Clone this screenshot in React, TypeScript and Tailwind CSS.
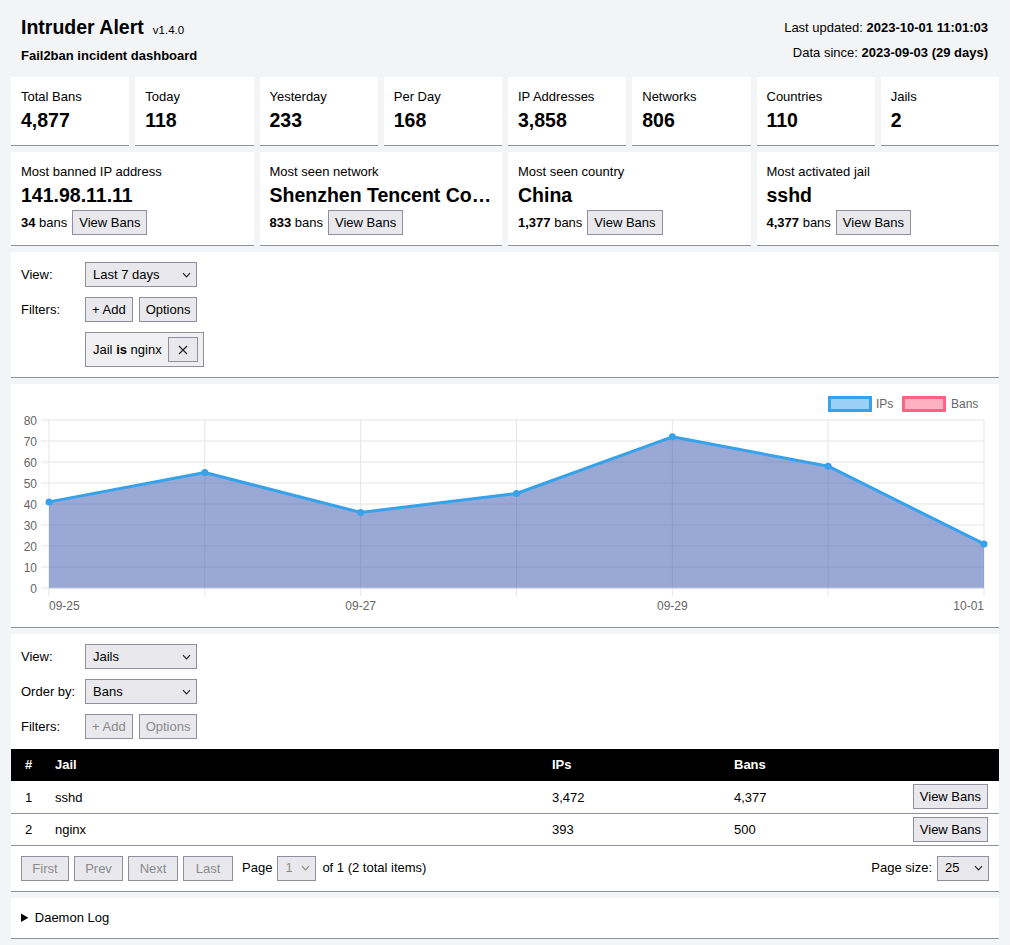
import React from "react";

function Chevron({ color = "#222" }: { color?: string }) {
  return (
    <svg width="9" height="6" viewBox="0 0 9 6" className="shrink-0">
      <path d="M1 1.2 L4.5 4.8 L8 1.2" stroke={color} strokeWidth="1.2" fill="none" />
    </svg>
  );
}

function Select({ value, className, disabled }: { value: string; className: string; disabled?: boolean }) {
  return (
    <div
      className={
        "flex h-[25px] items-center justify-between border border-[#8f8f9d] bg-[#e9e9ed] pl-[7px] pr-[5px] " +
        (disabled ? "text-[#8a8a8a] " : "") +
        className
      }
    >
      <span>{value}</span>
      <Chevron color={disabled ? "#8a8a8a" : "#222"} />
    </div>
  );
}

function Btn({ children, disabled, className = "" }: { children: React.ReactNode; disabled?: boolean; className?: string }) {
  return (
    <button
      className={
        "flex h-[25px] items-center justify-center border border-[#8f8f9d] bg-[#e9e9ed] px-[6px] leading-none " +
        (disabled ? "text-[#8a8a8a] " : "text-black ") +
        className
      }
    >
      {children}
    </button>
  );
}

function Stat({ label, value }: { label: string; value: string }) {
  return (
    <div className="h-[69px] border-b border-[#8f8f9d] bg-white px-[10px] pt-[10px]">
      <div className="leading-[19px]">{label}</div>
      <div className="text-[19.5px] font-bold leading-[28px]">{value}</div>
    </div>
  );
}

function Top({ label, value, bans }: { label: string; value: string; bans: string }) {
  return (
    <div className="h-[94px] min-w-0 border-b border-[#8f8f9d] bg-white px-[10px] pt-[10px]">
      <div className="leading-[19px]">{label}</div>
      <div className="truncate text-[19.5px] font-bold leading-[28px]">{value}</div>
      <div className="mt-[1px] flex items-center gap-[5px]">
        <span>
          <b>{bans}</b> bans
        </span>
        <Btn>View Bans</Btn>
      </div>
    </div>
  );
}

function Chart() {
  const xs = [38, 193.83, 349.67, 505.5, 661.33, 817.17, 973];
  const vals = [41, 55, 36, 45, 72, 58, 21];
  const y = (v: number) => 204 - v * 2.1;
  const pts = xs.map((x, i) => `${x},${y(vals[i])}`).join(" ");
  const area = `38,204 ${pts} 973,204`;
  const grid = [0, 10, 20, 30, 40, 50, 60, 70, 80];
  return (
    <svg width="988" height="243" viewBox="0 0 988 243" className="block">
      {grid.map((g) => (
        <g key={g}>
          <line x1="30" x2="973" y1={y(g)} y2={y(g)} stroke="#e5e5e5" strokeWidth="1" />
          <text x="26" y={y(g) + 4.5} textAnchor="end" fontSize="12" fill="#666" fontFamily="Liberation Sans, Arial, sans-serif">
            {g}
          </text>
        </g>
      ))}
      {xs.map((x, i) => (
        <line key={i} x1={x} x2={x} y1="36" y2="212" stroke="#e5e5e5" strokeWidth="1" />
      ))}
      <polygon points={area} fill="rgba(53,81,171,0.5)" />
      <line x1="38" x2="973" y1="204" y2="204" stroke="#c9cbe0" strokeWidth="1" />
      <polyline points={pts} fill="none" stroke="#36a2eb" strokeWidth="3" strokeLinejoin="round" />
      {xs.map((x, i) => (
        <circle key={i} cx={x} cy={y(vals[i])} r="3.5" fill="#36a2eb" />
      ))}
      <g fontSize="12" fill="#666" fontFamily="Liberation Sans, Arial, sans-serif">
        <text x="38" y="226" textAnchor="start">09-25</text>
        <text x="349.67" y="226" textAnchor="middle">09-27</text>
        <text x="661.33" y="226" textAnchor="middle">09-29</text>
        <text x="973" y="226" textAnchor="end">10-01</text>
      </g>
      <rect x="818.5" y="13.5" width="41" height="13" fill="rgba(54,162,235,0.5)" stroke="#36a2eb" strokeWidth="3" />
      <text x="865" y="23.5" fontSize="12" fill="#666" fontFamily="Liberation Sans, Arial, sans-serif">IPs</text>
      <rect x="892.5" y="13.5" width="41" height="13" fill="rgba(255,99,132,0.5)" stroke="#ff6384" strokeWidth="3" />
      <text x="940" y="23.5" fontSize="12" fill="#666" fontFamily="Liberation Sans, Arial, sans-serif">Bans</text>
    </svg>
  );
}

export default function App() {
  return (
    <div className="min-h-screen bg-[#f3f4f6] px-[11px] pb-[6px] font-['Liberation_Sans',Arial,sans-serif] text-[13px] text-black">
      <header className="flex justify-between pt-[15px] pb-[11px]">
        <div>
          <div className="flex h-[24px] items-baseline gap-[9px] pl-[10px] leading-[24px]">
            <span className="text-[19.5px] font-bold">Intruder Alert</span>
            <span className="text-[11.5px]">v1.4.0</span>
          </div>
          <div className="mt-[7px] pl-[10px] font-bold leading-[20px]">Fail2ban incident dashboard</div>
        </div>
        <div className="pr-[11px] text-right leading-[25px]">
          <div>
            Last updated: <b>2023-10-01 11:01:03</b>
          </div>
          <div>
            Data since: <b>2023-09-03 (29 days)</b>
          </div>
        </div>
      </header>

      <div className="flex flex-col gap-[6px]">
        <div className="grid grid-cols-8 gap-[6px]">
          <Stat label="Total Bans" value="4,877" />
          <Stat label="Today" value="118" />
          <Stat label="Yesterday" value="233" />
          <Stat label="Per Day" value="168" />
          <Stat label="IP Addresses" value="3,858" />
          <Stat label="Networks" value="806" />
          <Stat label="Countries" value="110" />
          <Stat label="Jails" value="2" />
        </div>

        <div className="grid grid-cols-4 gap-[6px]">
          <Top label="Most banned IP address" value="141.98.11.11" bans="34" />
          <Top label="Most seen network" value="Shenzhen Tencent Computer Systems Company Limited" bans="833" />
          <Top label="Most seen country" value="China" bans="1,377" />
          <Top label="Most activated jail" value="sshd" bans="4,377" />
        </div>

        <section className="flex flex-col gap-[10px] border-b border-[#8f8f9d] bg-white px-[10px] py-[10px]">
          <div className="flex items-center">
            <span className="w-[64px]">View:</span>
            <Select value="Last 7 days" className="w-[112px]" />
          </div>
          <div className="flex items-center">
            <span className="w-[64px]">Filters:</span>
            <div className="flex gap-[6px]">
              <Btn>+ Add</Btn>
              <Btn>Options</Btn>
            </div>
          </div>
          <div className="flex items-center pl-[64px]">
            <div className="flex h-[35px] items-center gap-[6px] border border-[#8f8f9d] bg-[#f0f0f3] pl-[7px] pr-[5px]">
              <span>
                Jail <b>is</b> nginx
              </span>
              <button className="flex h-[25px] w-[30px] items-center justify-center border border-[#8f8f9d] bg-[#e9e9ed]">
                <svg width="10" height="10" viewBox="0 0 10 10">
                  <path d="M1 1 L9 9 M9 1 L1 9" stroke="#222" strokeWidth="1.1" />
                </svg>
              </button>
            </div>
          </div>
        </section>

        <section className="border-b border-[#8f8f9d] bg-white">
          <Chart />
        </section>

        <section className="border-b border-[#8f8f9d] bg-white">
          <div className="flex flex-col gap-[10px] px-[10px] pt-[10px] pb-[10px]">
            <div className="flex items-center">
              <span className="w-[64px]">View:</span>
              <Select value="Jails" className="w-[112px]" />
            </div>
            <div className="flex items-center">
              <span className="w-[64px]">Order by:</span>
              <Select value="Bans" className="w-[112px]" />
            </div>
            <div className="flex items-center">
              <span className="w-[64px]">Filters:</span>
              <div className="flex gap-[6px]">
                <Btn disabled>+ Add</Btn>
                <Btn disabled>Options</Btn>
              </div>
            </div>
          </div>
          <table className="w-[988px] table-fixed border-collapse text-left">
            <colgroup>
              <col className="w-[34px]" />
              <col className="w-[497px]" />
              <col className="w-[182px]" />
              <col className="w-[180px]" />
              <col className="w-[95px]" />
            </colgroup>
            <thead>
              <tr className="h-[32px] bg-black text-white">
                <th className="pl-[14px] font-bold">#</th>
                <th className="pl-[10px] font-bold">Jail</th>
                <th className="pl-[10px] font-bold">IPs</th>
                <th className="pl-[10px] font-bold">Bans</th>
                <th></th>
              </tr>
            </thead>
            <tbody>
              {[
                ["1", "sshd", "3,472", "4,377"],
                ["2", "nginx", "393", "500"],
              ].map((r) => (
                <tr key={r[0]} className="h-[32px] border-b border-[#8f8f9d]">
                  <td className="pt-[1px] pl-[14px]">{r[0]}</td>
                  <td className="pt-[1px] pl-[10px]">{r[1]}</td>
                  <td className="pt-[1px] pl-[10px]">{r[2]}</td>
                  <td className="pt-[1px] pl-[10px]">{r[3]}</td>
                  <td className="pr-[11px]">
                    <div className="flex justify-end">
                      <Btn>View Bans</Btn>
                    </div>
                  </td>
                </tr>
              ))}
            </tbody>
          </table>
          <div className="flex h-[45px] items-center justify-between px-[10px]">
            <div className="flex items-center">
              <div className="flex gap-[5px]">
                <Btn disabled className="h-[24px] w-[48px]">First</Btn>
                <Btn disabled className="h-[24px] w-[49px]">Prev</Btn>
                <Btn disabled className="h-[24px] w-[50px]">Next</Btn>
                <Btn disabled className="h-[24px] w-[50px]">Last</Btn>
              </div>
              <span className="ml-[9px] mr-[5px]">Page</span>
              <Select value="1" className="w-[39px]" disabled />
              <span className="ml-[6px]">of 1 (2 total items)</span>
            </div>
            <div className="flex items-center gap-[5px]">
              <span>Page size:</span>
              <Select value="25" className="w-[52px]" />
            </div>
          </div>
        </section>

        <section className="border-b border-[#8f8f9d] bg-white px-[10px] py-[10px]">
          <details>
            <summary className="cursor-pointer leading-[20px]">Daemon Log</summary>
          </details>
        </section>
      </div>
    </div>
  );
}
